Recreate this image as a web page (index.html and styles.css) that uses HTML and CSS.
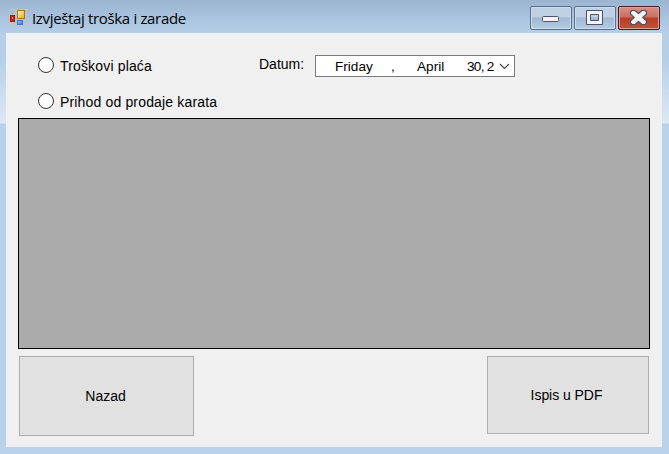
FILE: index.html
```
<!DOCTYPE html>
<html lang="hr">
<head>
<meta charset="utf-8">
<title>Izvještaj troška i zarade</title>
<link rel="stylesheet" href="styles.css">
</head>
<body>
<div class="window">
  <header class="titlebar">
    <svg class="app-icon" width="18" height="18" viewBox="0 0 18 18" shape-rendering="crispEdges">
      <defs>
        <linearGradient id="gold" x1="0" y1="0" x2="1" y2="1"><stop offset="0" stop-color="#fff0a0"/><stop offset="1" stop-color="#f0b010"/></linearGradient>
        <linearGradient id="azure" x1="0" y1="0" x2="1" y2="1"><stop offset="0" stop-color="#9cc4ff"/><stop offset="1" stop-color="#3c78e0"/></linearGradient>
      </defs>
      <path d="M.5 .5h6v5h-6zM.5 13.5h6v4h-6zM.5 5.5v8M17.5 10.5v7h-11M7.500.5h10v10h-10z" fill="none" stroke="#c3c3c3"/>
      <rect x="1" y="6" width="5" height="7" fill="#a51a10"/>
      <rect x="2" y="7" width="3" height="5" fill="#c92a18"/>
      <rect x="3" y="8" width="1" height="2" fill="#f08468"/>
      <rect x="8" y="1" width="8" height="9" fill="#b07a08"/>
      <rect x="9" y="2" width="6" height="7" fill="url(#gold)"/>
      <rect x="8" y="11" width="6" height="5" fill="#3f72c8"/>
      <rect x="9" y="12" width="4" height="3" fill="url(#azure)"/>
    </svg>
    <h1 class="title">Izvještaj troška i zarade</h1>
    <div class="controls">
      <button class="control" aria-label="Minimize">
        <svg width="42" height="24" viewBox="0 0 42 24"><rect x="12.500" y="10.500" width="16" height="5" rx="1" fill="#f3f3f3" stroke="#4d5365"/></svg>
      </button>
      <button class="control" aria-label="Maximize">
        <svg width="42" height="24" viewBox="0 0 42 24"><path d="M12.500 4.500h16v14h-16zM16.500 8.500v6h8v-6z" fill="#f3f3f3" fill-rule="evenodd" stroke="#4d5365" stroke-linejoin="round"/></svg>
      </button>
      <button class="control close" aria-label="Close">
        <svg width="42" height="24" viewBox="0 0 42 24"><path d="M14 4.500h3l3.500 3 3.500-3h3l1.500 1.500v2l-3.700 3.500 3.700 3.500v2L27 18.500h-3l-3.500-3-3.500 3h-3L12.500 17v-2l3.700-3.500L12.500 8V6z" fill="#f3f3f3" stroke="#4d5365" stroke-width="1.200" stroke-linejoin="round"/></svg>
      </button>
    </div>
  </header>
  <main class="client">
    <section class="filters">
      <div class="options">
        <label class="option"><input class="radio" type="radio" name="report"><span class="costs">Troškovi plaća</span></label>
        <label class="option"><input class="radio" type="radio" name="report"><span class="income">Prihod od prodaje karata</span></label>
      </div>
      <span class="date-label">Datum:</span>
      <div class="date-picker">
        <span class="weekday">Friday</span><span class="comma">,</span><span class="month">April</span><span class="day">30, 2</span>
        <svg class="chevron" width="11" height="7" viewBox="0 0 11 7"><path d="M1 1l4.500 4.500L10 1" fill="none" stroke="#444" stroke-width="1.100"/></svg>
      </div>
    </section>
    <section class="data-grid"></section>
    <footer class="actions">
      <button class="action back"><span class="back-text">Nazad</span></button>
      <button class="action print"><span class="print-text">Ispis u PDF</span></button>
    </footer>
  </main>
</div>
</body>
</html>
```
FILE: styles.css
```
* { box-sizing: border-box; }
body {
  margin: 0;
  overflow: hidden;
  font: 14px/18px "Liberation Sans", Arial, sans-serif;
  color: #000;
}
button { padding: 0; font: inherit; color: inherit; }
span { white-space: nowrap; }
.window {
  display: flex;
  flex-direction: column;
  width: 669px;
  height: 454px;
  padding: 0 7px 7px 6px;
  background: linear-gradient(#9bb5d1 0, #b6cfe9 33px, #b6cfe9 60px, #dce9f6 123px, #b9d1ea 124px);
}
.titlebar {
  display: flex;
  flex: 0 0 33px;
  margin: 0 -7px 0 -6px;
  padding-left: 9px;
  background: linear-gradient(#9bb5d1, #b6cfe9);
}
.app-icon { margin-top: 9px; }
.title {
  margin: 8px 0 0 5px;
  font: 15px/20px "Open Sans", "Noto Sans", sans-serif;
  white-space: nowrap;
  width: 160px;
  letter-spacing: -0.34px;
}
.controls {
  display: flex;
  gap: 2px;
  margin: 6px 9px 0 auto;
}
.control {
  width: 42px;
  height: 24px;
  border: 1px solid #596f8c;
  border-radius: 2px;
  background: linear-gradient(#bed0e3 0 45%, #a0b8d2 50%, #b5cce4);
  box-shadow: inset 0 0 0 1px #ccdded;
}
.control svg { display: block; margin: -1px; }
.control.close {
  border-color: #491b23;
  background: linear-gradient(#d69085, #cb6e61 46%, #b83b27 50%, #c4503c);
  box-shadow: inset 0 0 0 1px #e0a093;
}
.client {
  display: flex;
  flex-direction: column;
  height: 414px;
  padding: 0 12px;
  background: #f0f0f0;
}
.filters { display: flex; height: 85px; }
.options { width: 241px; padding: 23px 0 0 20px; }
.option { display: flex; height: 18px; margin-bottom: 18px; letter-spacing: 0.16px; }
.radio {
  appearance: none;
  width: 16px;
  height: 16px;
  margin: 1px 6px 0 0;
  border: 1px solid #333;
  border-radius: 50%;
  background: #fff;
}
.option span { padding-top: 1px; }
.date-label { width: 56px; padding-top: 22px; }
.date-picker {
  display: flex;
  width: 200px;
  height: 22px;
  margin-top: 22px;
  padding-left: 19px;
  border: 1px solid #7a7a7a;
  background: #fff;
  font-size: 13.6px;
  line-height: 21px;
}
.weekday { width: 56px; }
.comma { width: 26px; }
.month { width: 50px; }
.day { width: 32px; letter-spacing: -0.7px; }
.chevron { margin-top: 7px; }
.data-grid {
  height: 231px;
  width: 632px;
  border: 1px solid #000;
  background: #ababab;
}
.actions {
  display: flex;
  justify-content: space-between;
  align-items: flex-start;
  padding: 7px 1px 0;
}
.action { border: 1px solid #adadad; background: #e1e1e1; }
.back { width: 175px; height: 80px; padding-right: 2px; }
.print { width: 162px; height: 78px; padding-right: 3px; letter-spacing: -0.05px; }
```
